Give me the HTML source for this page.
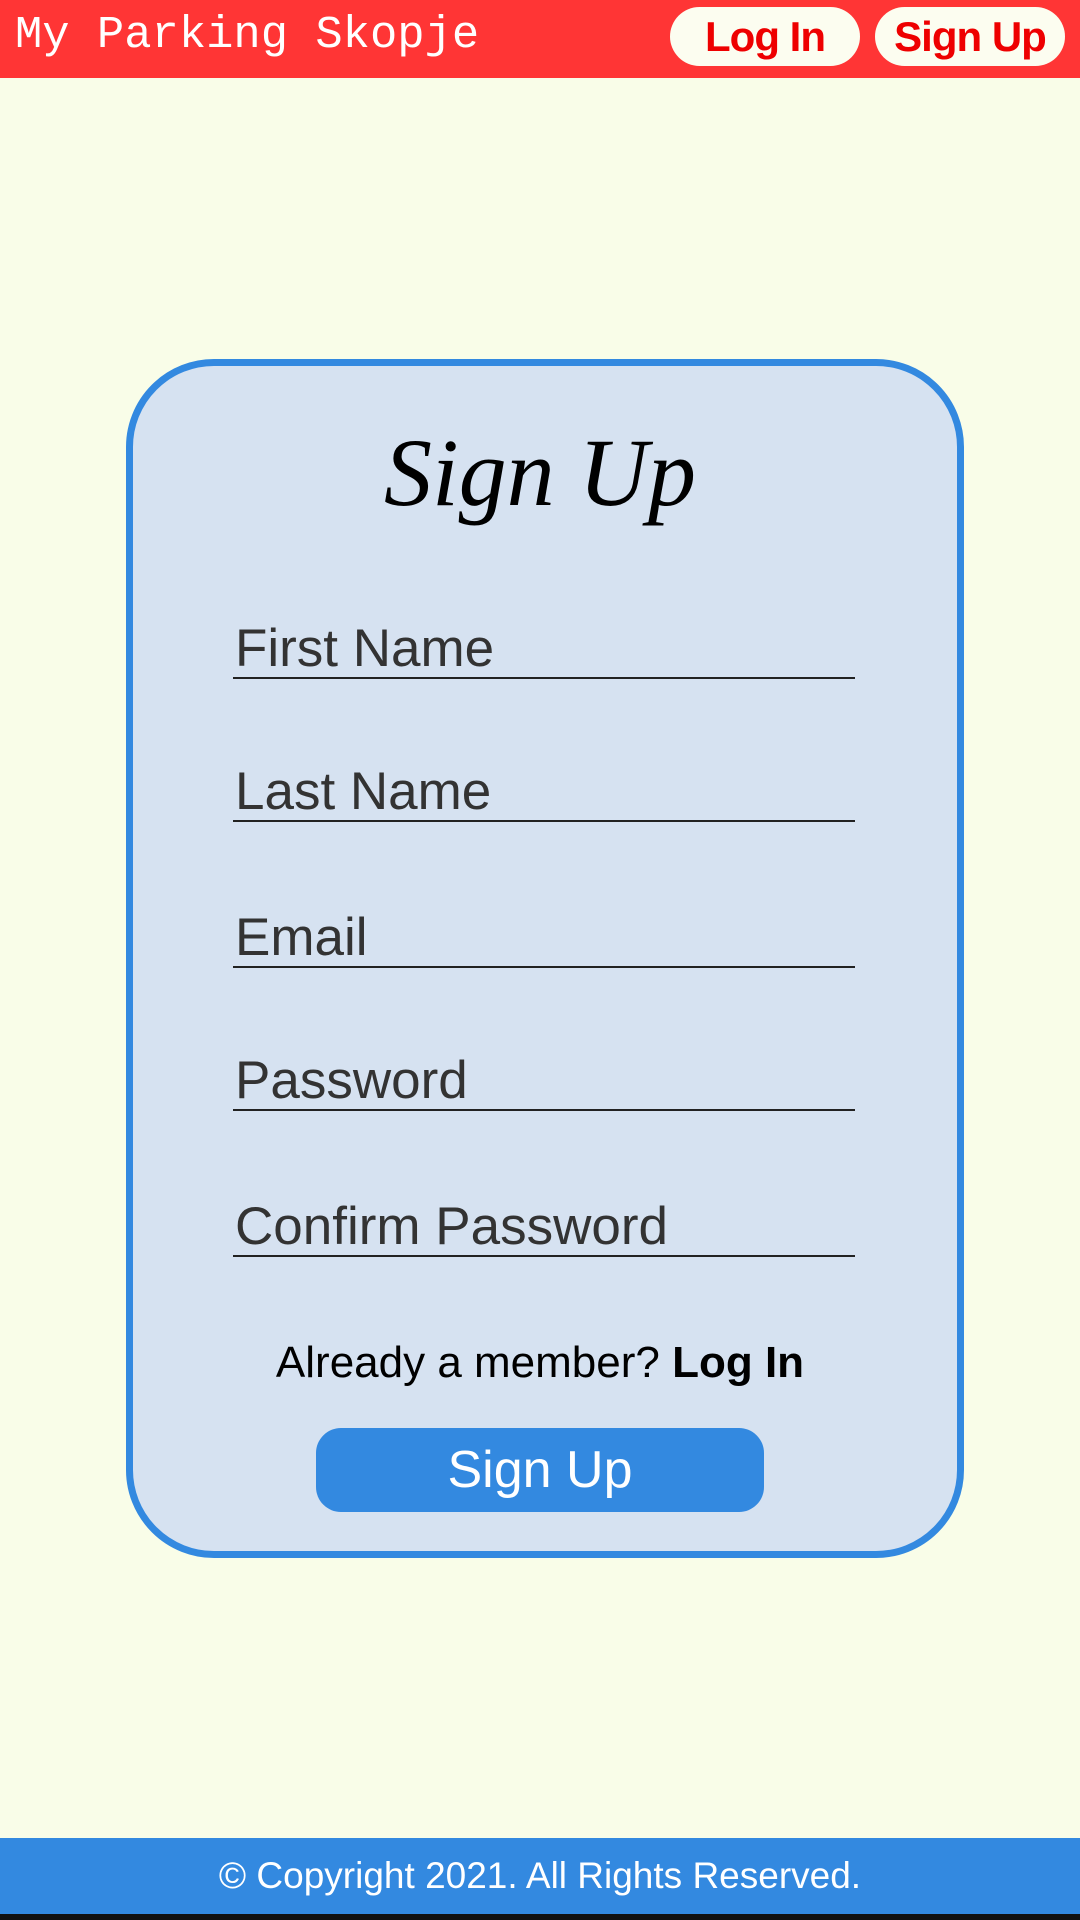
<!DOCTYPE html>
<html><head><style>
*{margin:0;padding:0;box-sizing:border-box}
body{width:1080px;height:1920px;background:#f9fde8;position:relative;font-family:"Liberation Sans",sans-serif;overflow:hidden}
.hdr{position:absolute;left:0;top:0;width:1080px;height:78px;background:#ff3535}
.logo{position:absolute;left:15px;top:8px;font-family:"Liberation Mono",monospace;font-size:45.5px;color:#fff;line-height:54px}
.hb{position:absolute;top:7px;height:59px;width:190px;border-radius:30px;background:#fcfdf0;color:#e00;font-weight:bold;font-size:42px;text-align:center;line-height:59px;letter-spacing:-1px}
.card{position:absolute;left:126px;top:359px;width:838px;height:1199px;border:7px solid #3389e0;border-radius:88px;background:#d6e2f1}
.title{position:absolute;left:0;width:100%;top:417px;text-align:center;font-family:"Liberation Serif",serif;font-style:italic;font-size:96px;color:#000}
.f{position:absolute;left:233px;width:622px;border-bottom:2px solid #222;font-size:53px;color:#333;line-height:56px;padding-left:2px}
.am{position:absolute;left:0;width:100%;top:1338px;text-align:center;font-size:44px;color:#000}
.btn{position:absolute;left:316px;top:1428px;width:448px;height:84px;border-radius:25px;background:#3389e0;color:#fff;font-size:52px;text-align:center;line-height:84px}
.ftr{position:absolute;left:0;top:1838px;width:1080px;height:76px;background:#3389e0;color:#fff;font-size:37px;text-align:center;line-height:76px}
.blk{position:absolute;left:0;top:1914px;width:1080px;height:6px;background:#111}
</style></head><body>
<div class="hdr"><div class="logo">My Parking Skopje</div>
<div class="hb" style="left:670px">Log In</div>
<div class="hb" style="left:875px">Sign Up</div></div>
<div class="card"></div>
<div class="title">Sign Up</div>
<div class="f" style="top:621px">First Name</div>
<div class="f" style="top:764px">Last Name</div>
<div class="f" style="top:910px">Email</div>
<div class="f" style="top:1053px">Password</div>
<div class="f" style="top:1199px">Confirm Password</div>
<div class="am">Already a member? <b>Log In</b></div>
<div class="btn">Sign Up</div>
<div class="ftr">© Copyright 2021. All Rights Reserved.</div>
<div class="blk"></div>
</body></html>
